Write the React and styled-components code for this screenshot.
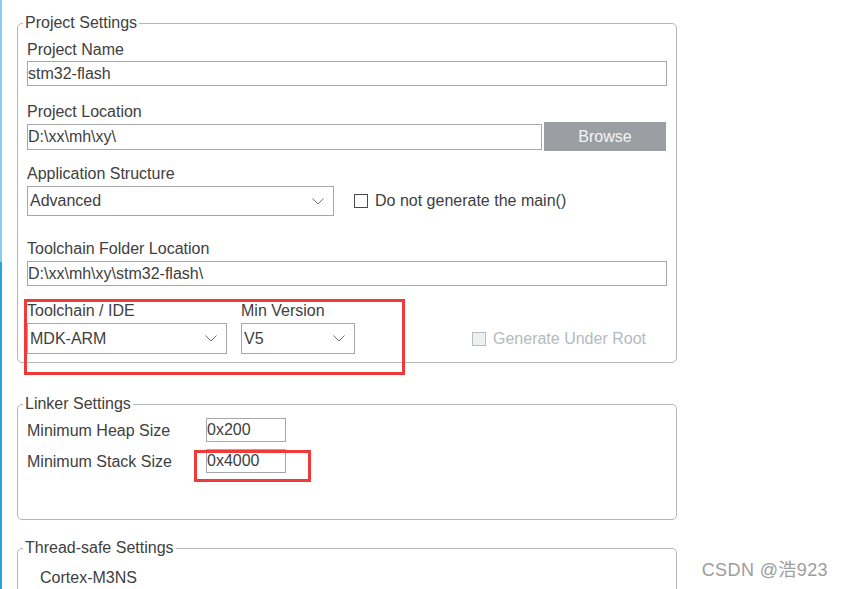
import React from "react";
import styled, { createGlobalStyle } from "styled-components";

const GlobalStyle = createGlobalStyle`
  html, body {
    margin: 0;
    padding: 0;
    background: #fff;
  }
  body {
    font-family: "Liberation Sans", Arial, sans-serif;
    font-size: 16px;
    color: #404040;
  }
  * {
    box-sizing: border-box;
  }
`;

const Page = styled.div`
  position: relative;
  display: flex;
  width: 843px;
  height: 589px;
  overflow: hidden;
  background: #fff;
`;

const EdgeStrip = styled.div`
  flex: 0 0 2px;
  background: linear-gradient(
    to bottom,
    #86ccef 0,
    #86ccef 262px,
    #2ba1df 262px,
    #2ba1df 100%
  );
`;

const Main = styled.div`
  display: flex;
  flex-direction: column;
  width: 675px;
  padding: 14px 0 0 15px;
`;

const Group = styled.fieldset`
  margin: ${(p) => p.$mt || 0}px 0 0 0;
  min-width: 0;
  border: 1px solid #b3b6ba;
  border-radius: 5px;
  padding: ${(p) => p.$pt}px 9px ${(p) => p.$pb}px 9px;
`;

const Legend = styled.legend`
  font-size: 16px;
  line-height: 18px;
  padding: 0 2px;
  margin-left: -4px;
  color: #404040;
`;

const FieldBlock = styled.div`
  display: flex;
  flex-direction: column;
  margin-top: ${(p) => p.$mt || 0}px;
`;

const Label = styled.label`
  display: block;
  line-height: 18px;
  padding-top: 1px;
  margin-bottom: ${(p) => p.$gap ?? 2}px;
  white-space: nowrap;
`;

const TextBox = styled.div`
  display: flex;
  align-items: center;
  height: ${(p) => p.$h || 25}px;
  width: ${(p) => (p.$w ? `${p.$w}px` : "100%")};
  flex: ${(p) => (p.$grow ? 1 : "none")};
  border: 1px solid #a4a7ab;
  background: #fff;
  padding: 0 1px 0 0;
  line-height: 18px;
  white-space: nowrap;
  overflow: hidden;
`;

const Row = styled.div`
  display: flex;
  align-items: ${(p) => p.$align || "center"};
  gap: ${(p) => p.$gap || 0}px;
`;

const BrowseButton = styled.div`
  display: flex;
  align-items: center;
  justify-content: center;
  width: 122px;
  height: 29px;
  margin-right: 1px;
  background: #9b9fa4;
  color: #f5f5f5;
  line-height: 18px;
`;

const SelectBox = styled.div`
  display: flex;
  align-items: center;
  justify-content: space-between;
  width: ${(p) => p.$w}px;
  height: ${(p) => p.$h || 31}px;
  border: 1px solid #a4a7ab;
  background: #fff;
  padding: 0 9px 0 2px;
  line-height: 18px;
`;

const Chevron = styled.svg`
  width: 12px;
  height: 7px;
  flex: none;
`;

const CheckLabel = styled.div`
  display: flex;
  align-items: center;
  gap: 7px;
  color: ${(p) => (p.$disabled ? "#b6babe" : "#404040")};
  white-space: nowrap;
  line-height: 18px;
`;

const Box = styled.span`
  display: inline-block;
  width: 14px;
  height: 14px;
  border: 1px solid ${(p) => (p.$disabled ? "#b9bcbf" : "#4a4a4a")};
  background: ${(p) => (p.$disabled ? "#eef0f2" : "#fff")};
`;

const Column = styled.div`
  display: flex;
  flex-direction: column;
`;

const RootOption = styled.div`
  display: flex;
  align-items: center;
  height: 31px;
  margin-left: 103px;
`;

const LinkerGrid = styled.div`
  display: grid;
  grid-template-columns: 179px 80px;
  row-gap: 7px;
  align-items: center;
`;

const CoreName = styled.div`
  line-height: 18px;
  padding-top: 2px;
  margin-left: 13px;
`;

const Highlight = styled.div`
  position: absolute;
  left: ${(p) => p.$x}px;
  top: ${(p) => p.$y}px;
  width: ${(p) => p.$w}px;
  height: ${(p) => p.$h}px;
  border: 3px solid #f03a3a;
  pointer-events: none;
`;

const Watermark = styled.div`
  position: absolute;
  right: 15px;
  top: 560px;
  font-family: "Liberation Sans", "Noto Sans CJK SC", sans-serif;
  font-size: 18px;
  letter-spacing: 0.4px;
  line-height: 20px;
  color: #9d9d9d;
`;

function Select({ value, width, height }) {
  return (
    <SelectBox $w={width} $h={height}>
      <span>{value}</span>
      <Chevron viewBox="0 0 12 7">
        <polyline
          points="0.5,0.5 6,6 11.5,0.5"
          fill="none"
          stroke="#707378"
          strokeWidth="1"
        />
      </Chevron>
    </SelectBox>
  );
}

export default function App() {
  return (
    <>
      <GlobalStyle />
      <Page>
        <EdgeStrip />
        <Main>
          <Group $pt={8} $pb={8}>
            <Legend>Project Settings</Legend>

            <FieldBlock>
              <Label>Project Name</Label>
              <TextBox>stm32-flash</TextBox>
            </FieldBlock>

            <FieldBlock $mt={16}>
              <Label $gap={1}>Project Location</Label>
              <Row $gap={2}>
                <TextBox $h={26} $grow>
                  D:\xx\mh\xy\
                </TextBox>
                <BrowseButton>Browse</BrowseButton>
              </Row>
            </FieldBlock>

            <FieldBlock $mt={13}>
              <Label $gap={3}>Application Structure</Label>
              <Row $gap={20}>
                <Select value="Advanced" width={307} height={30} />
                <CheckLabel>
                  <Box />
                  Do not generate the main()
                </CheckLabel>
              </Row>
            </FieldBlock>

            <FieldBlock $mt={23}>
              <Label $gap={3}>Toolchain Folder Location</Label>
              <TextBox>D:\xx\mh\xy\stm32-flash\</TextBox>
            </FieldBlock>

            <FieldBlock $mt={15}>
              <Row $align="flex-end" $gap={14}>
                <Column>
                  <Label $gap={3}>Toolchain / IDE</Label>
                  <Select value="MDK-ARM" width={200} />
                </Column>
                <Column>
                  <Label $gap={3}>Min Version</Label>
                  <Select value="V5" width={114} />
                </Column>
                <RootOption>
                  <CheckLabel $disabled>
                    <Box $disabled />
                    Generate Under Root
                  </CheckLabel>
                </RootOption>
              </Row>
            </FieldBlock>
          </Group>

          <Group $mt={32} $pt={5} $pb={46}>
            <Legend>Linker Settings</Legend>
            <LinkerGrid>
              <Label $gap={0}>Minimum Heap Size</Label>
              <TextBox $h={24} $w={80}>
                0x200
              </TextBox>
              <Label $gap={0}>Minimum Stack Size</Label>
              <TextBox $h={24} $w={80}>
                0x4000
              </TextBox>
            </LinkerGrid>
          </Group>

          <Group $mt={19} $pt={10} $pb={40}>
            <Legend>Thread-safe Settings</Legend>
            <CoreName>Cortex-M3NS</CoreName>
          </Group>
        </Main>

        <Highlight $x={24} $y={299} $w={381} $h={76} />
        <Highlight $x={194} $y={450} $w={117} $h={32} />
        <Watermark>CSDN @浩923</Watermark>
      </Page>
    </>
  );
}
